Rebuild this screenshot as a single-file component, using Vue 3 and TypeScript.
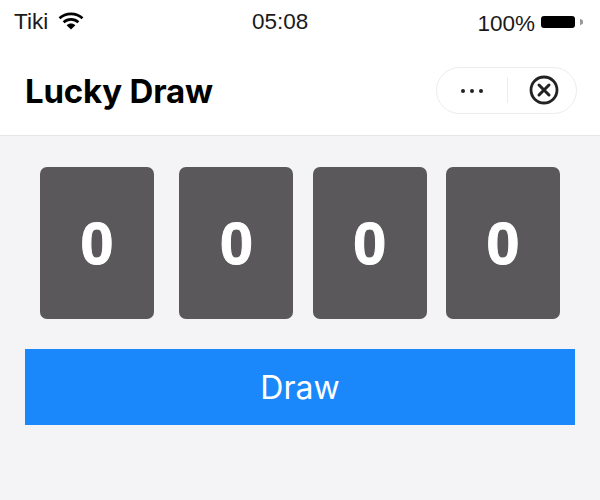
<script setup lang="ts">
const digits: string[] = ['0', '0', '0', '0']
</script>

<template>
  <div class="page">
    <div class="head">
      <div class="status">
        <div class="status-left">
          <span>Tiki</span>
          <svg class="wifi" width="26" height="20" viewBox="0 0 26 20">
            <path d="M1.5 7.2C7.8 1.4 18.2 1.4 24.5 7.2" fill="none" stroke="#000" stroke-width="2.6" />
            <path d="M5.6 11.2C9.8 7.4 16.2 7.4 20.4 11.2" fill="none" stroke="#000" stroke-width="2.6" />
            <path d="M8.6 14.2 13 18.6 17.4 14.2C14.8 11.8 11.2 11.8 8.6 14.2Z" fill="#000" />
          </svg>
        </div>
        <div class="time">05:08</div>
        <div class="status-right">
          <span class="pct">100%</span>
          <span class="battery"></span>
          <span class="nub"></span>
        </div>
      </div>
      <div class="nav">
        <div class="title">Lucky Draw</div>
        <div class="capsule">
          <div class="dots"><i></i><i></i><i></i></div>
          <div class="divider"></div>
          <svg class="close" width="30" height="30" viewBox="0 0 30 30">
            <circle cx="15" cy="15" r="13" fill="none" stroke="#222" stroke-width="2.8" />
            <path d="M10 10 20 20M20 10 10 20" stroke="#222" stroke-width="3" stroke-linecap="round" />
          </svg>
        </div>
      </div>
    </div>
    <div class="main">
      <div class="cards">
        <div v-for="(d, i) in digits" :key="i" class="card" :class="{ first: i === 0 }">{{ d }}</div>
      </div>
      <button class="draw">Draw</button>
    </div>
  </div>
</template>

<style>
html, body { margin: 0; background: #f4f3f5; }
</style>

<style scoped>
.page {
  width: 600px;
  height: 500px;
  overflow: hidden;
  background: #f4f3f5;
  font-family: Inter, "Liberation Sans", sans-serif;
  color: #000;
}
.head {
  height: 135px;
  background: #fff;
  border-bottom: 1px solid #e6e6e8;
}
.status {
  height: 44px;
  padding: 0 17px 0 14px;
  display: grid;
  grid-template-columns: 238px auto 1fr;
  align-items: center;
  font-family: "Liberation Sans", sans-serif;
  font-size: 22.5px;
  color: #1a1a1a;
}
.status-left {
  display: flex;
  align-items: center;
  gap: 10px;
}
.wifi { margin-top: -3px; }
.status-right {
  display: flex;
  align-items: center;
  justify-content: flex-end;
}
.pct { margin-top: 3px; }
.battery {
  width: 34px;
  height: 12px;
  margin-left: 6px;
  border-radius: 3px;
  background: #000;
}
.nub {
  width: 3px;
  height: 7px;
  margin-left: 5px;
  background: #999;
  clip-path: polygon(0 0, 100% 30%, 100% 70%, 0 100%);
}
.nav {
  height: 91px;
  padding: 0 23px 0 25px;
  display: flex;
  align-items: center;
  justify-content: space-between;
}
.title {
  font-size: 33px;
  font-weight: 700;
  letter-spacing: -0.2px;
  margin-top: 2px;
}
.capsule {
  box-sizing: border-box;
  width: 141px;
  height: 47px;
  display: flex;
  align-items: center;
  border: 1px solid #ececee;
  border-radius: 24px;
  margin-top: 1px;
}
.dots {
  width: 70px;
  display: flex;
  justify-content: center;
  gap: 5px;
  margin-top: 1px;
}
.dots i {
  width: 4px;
  height: 4px;
  border-radius: 50%;
  background: #222;
}
.divider {
  width: 1px;
  height: 26px;
  background: #ececee;
}
.close { margin-left: 21px; }
.main {
  padding: 31px 25px 0;
}
.cards {
  display: flex;
  justify-content: space-between;
  padding: 0 15px;
}
.card {
  width: 114px;
  height: 152px;
  border-radius: 7px;
  background: #5a585b;
  color: #fff;
  display: flex;
  align-items: center;
  justify-content: center;
  font-family: "Liberation Sans", sans-serif;
  font-size: 60px;
  font-weight: 700;
  -webkit-text-stroke: 1px #fff;
  margin-left: 19px;
}
.card.first { margin-left: 0; margin-right: 6px; }
.draw {
  display: block;
  width: 550px;
  height: 76px;
  margin-top: 30px;
  border: 0;
  padding: 0;
  background: #1a88fa;
  color: #fff;
  font-family: Inter, "Liberation Sans", sans-serif;
  font-size: 32px;
}
</style>
